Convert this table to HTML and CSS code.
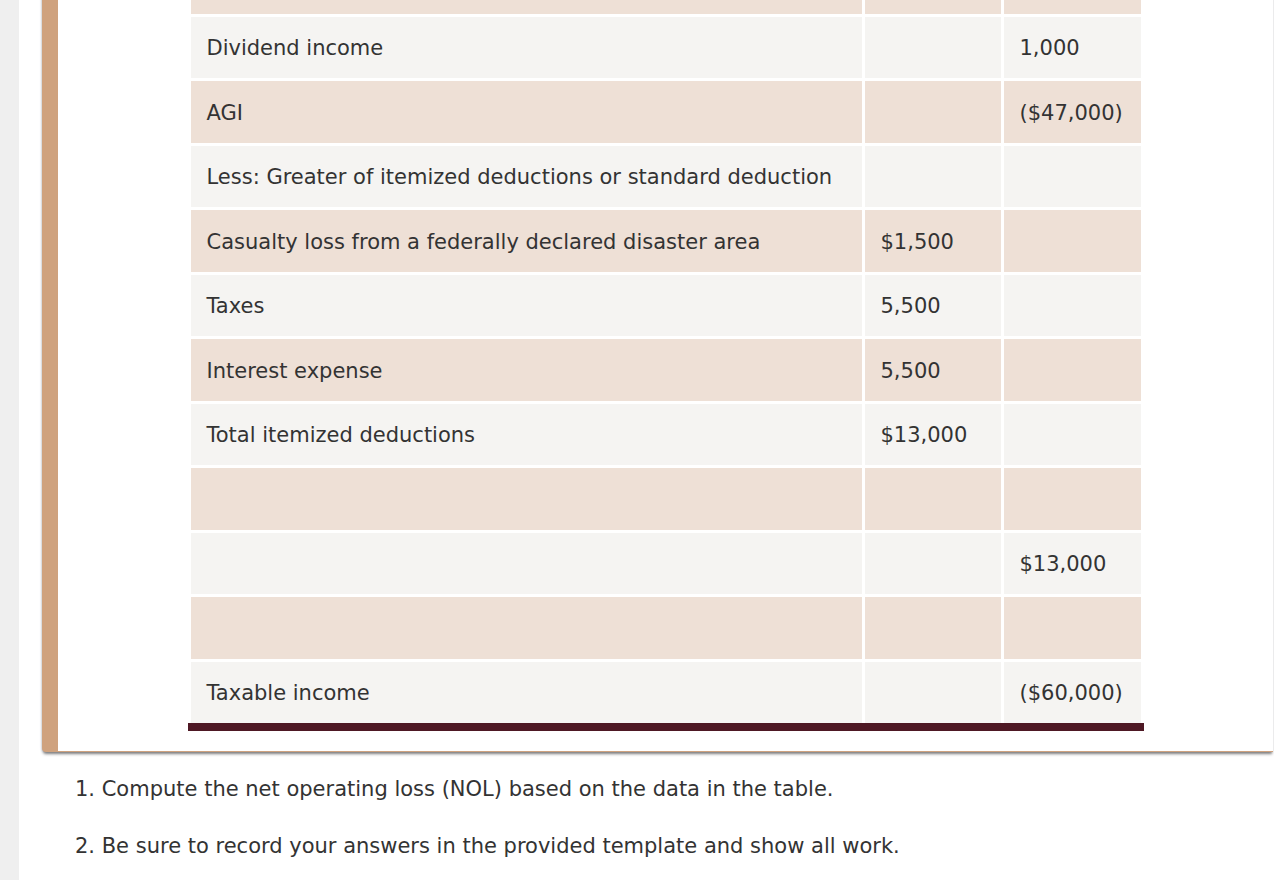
FILE: index.html
```html
<!DOCTYPE html>
<html lang="en">
<head>
<meta charset="utf-8">
<title>NOL table</title>
<link rel="stylesheet" href="styles.css">
</head>
<body>
<div class="page">
  <div class="gutter"></div>
  <div class="main">
    <div class="card">
      <div class="table">
        <div class="cell tan"></div><div class="cell tan"></div><div class="cell tan"></div>

        <div class="cell light">Dividend income</div><div class="cell light"></div><div class="cell light">1,000</div>
        <div class="cell tan">AGI</div><div class="cell tan"></div><div class="cell tan">($47,000)</div>
        <div class="cell light">Less: Greater of itemized deductions or standard deduction</div><div class="cell light"></div><div class="cell light"></div>
        <div class="cell tan">Casualty loss from a federally declared disaster area</div><div class="cell tan">$1,500</div><div class="cell tan"></div>
        <div class="cell light">Taxes</div><div class="cell light">5,500</div><div class="cell light"></div>
        <div class="cell tan">Interest expense</div><div class="cell tan">5,500</div><div class="cell tan"></div>
        <div class="cell light">Total itemized deductions</div><div class="cell light">$13,000</div><div class="cell light"></div>
        <div class="cell tan"></div><div class="cell tan"></div><div class="cell tan"></div>
        <div class="cell light"></div><div class="cell light"></div><div class="cell light">$13,000</div>
        <div class="cell tan"></div><div class="cell tan"></div><div class="cell tan"></div>
        <div class="cell light">Taxable income</div><div class="cell light"></div><div class="cell light">($60,000)</div>
      </div>
    </div>
    <div class="notes">
      <p class="note">1. Compute the net operating loss (NOL) based on the data in the table.</p>
      <p class="note">2. Be sure to record your answers in the provided template and show all work.</p>
    </div>
  </div>
</div>
</body>
</html>
```

FILE: styles.css
```css
html, body {
  margin: 0;
  padding: 0;
  background: #ffffff;
  overflow: hidden;
}

body {
  font-family: "DejaVu Sans", Verdana, sans-serif;
  font-size: 21px;
  color: #333333;
}

.page {
  display: flex;
  min-height: 880px;
}

.gutter {
  width: 19px;
  flex: 0 0 19px;
  background: #efefef;
}

.main {
  flex: 1;
  padding-left: 23px;
  padding-right: 1px;
}

.card {
  margin-top: -51px;
  background: #ffffff;
  border-left: 16px solid #cfa27e;
  border-bottom: 1px solid #cfa27e;
  border-bottom-left-radius: 4px;
  box-shadow: 0 3px 3px -1px rgba(0, 0, 0, 0.5), -1px 0 2px rgba(80, 100, 140, 0.15);
  padding-bottom: 20px;
}

.table {
  width: 950px;
  margin: 0 auto;
  display: grid;
  grid-template-columns: 671px 136px 137px;
  grid-auto-rows: 61.5px;
  gap: 3px;
  padding: 3px 3px 0 3px;
  border-bottom: 8px solid #4e1824;
}

.cell {
  display: flex;
  align-items: center;
  padding: 2px 16px 0 16px;
  white-space: nowrap;
}

.light {
  background: #f5f4f2;
}

.tan {
  background: #eee0d6;
}

.notes {
  padding-left: 33px;
  padding-top: 23px;
}

.note {
  margin: 0 0 28.7px 0;
  line-height: 28px;
}
```
